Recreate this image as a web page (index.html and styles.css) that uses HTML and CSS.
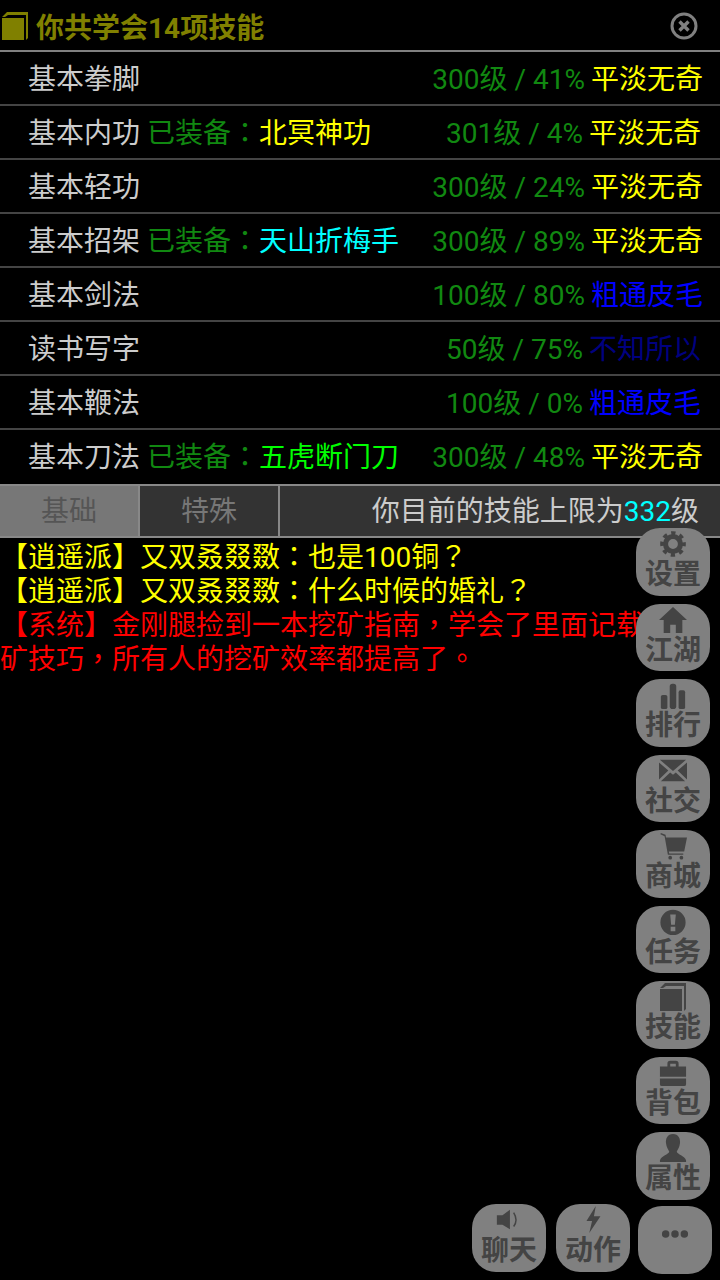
FILE: index.html
```html
<!DOCTYPE html>
<html lang="zh-CN">
<head>
  <meta charset="UTF-8" />
  <meta name="viewport" content="width=device-width, initial-scale=1.0" />
  <title>技能</title>
  <link rel="stylesheet" href="styles.css">
</head>
<body>
  <div class="header">
    <svg class="book-icon" viewBox="0 0 26 28"><path d="M0 5 L5 0 H26 V26 L24 28 V3 H6 L3 5 Z M0 6 H22 V28 H0 Z"/></svg>
    <div class="title">你共学会14项技能</div>
    <svg class="close-icon" viewBox="0 0 28 28"><circle cx="14" cy="14" r="12" fill="none" stroke-width="3"/><path d="M9.5 9.5 L18.5 18.5 M18.5 9.5 L9.5 18.5" fill="none" stroke-width="3.4"/></svg>
  </div>

  <div class="skills">
    <div class="row">
      <span class="skill">基本拳脚</span>
      <span class="level">300级 / 41%</span><span class="grade yellow">平淡无奇</span>
    </div>
    <div class="row narrow">
      <span class="skill">基本内功</span><span class="equip">已装备<span class="punct" lang="zh-TW">：</span></span><span class="yellow">北冥神功</span>
      <span class="level">301级 / 4%</span><span class="grade yellow">平淡无奇</span>
    </div>
    <div class="row">
      <span class="skill">基本轻功</span>
      <span class="level">300级 / 24%</span><span class="grade yellow">平淡无奇</span>
    </div>
    <div class="row">
      <span class="skill">基本招架</span><span class="equip">已装备<span class="punct" lang="zh-TW">：</span></span><span class="cyan">天山折梅手</span>
      <span class="level">300级 / 89%</span><span class="grade yellow">平淡无奇</span>
    </div>
    <div class="row">
      <span class="skill">基本剑法</span>
      <span class="level">100级 / 80%</span><span class="grade blue">粗通皮毛</span>
    </div>
    <div class="row narrow">
      <span class="skill">读书写字</span>
      <span class="level">50级 / 75%</span><span class="grade navy">不知所以</span>
    </div>
    <div class="row narrow">
      <span class="skill">基本鞭法</span>
      <span class="level">100级 / 0%</span><span class="grade blue">粗通皮毛</span>
    </div>
    <div class="row">
      <span class="skill">基本刀法</span><span class="equip">已装备<span class="punct" lang="zh-TW">：</span></span><span class="lime">五虎断门刀</span>
      <span class="level">300级 / 48%</span><span class="grade yellow">平淡无奇</span>
    </div>
  </div>

  <div class="tabs">
    <div class="tab active">基础</div>
    <div class="tab">特殊</div>
    <div class="limit">你目前的技能上限为<span class="cyan">332</span>级</div>
  </div>

  <div class="chat">
    <div class="yellow">【逍遥派】又双叒叕敪<span class="punct" lang="zh-TW">：</span>也是100铜<span class="punct" lang="zh-TW">？</span></div>
    <div class="yellow">【逍遥派】又双叒叕敪<span class="punct" lang="zh-TW">：</span>什么时候的婚礼<span class="punct" lang="zh-TW">？</span></div>
    <div class="red">【系统】金刚腿捡到一本挖矿指南<span class="punct" lang="zh-TW">，</span>学会了里面记载的挖矿技巧<span class="punct" lang="zh-TW">，</span>所有人的挖矿效率都提高了<span class="punct" lang="zh-TW">。</span></div>
  </div>

  <div class="side-menu">
    <div class="menu-btn">
      <svg viewBox="0 0 30 30"><circle class="line" cx="15" cy="15" r="8" stroke-width="5.5"/><circle class="line" cx="15" cy="15" r="11.5" stroke-width="4.5" stroke-dasharray="4.5 4.53" stroke-dashoffset="2.25"/></svg>
      <span>设置</span>
    </div>
    <div class="menu-btn">
      <svg viewBox="0 0 30 30"><path d="M15 1 L30 15 H25 V29 H18 V20 H12 V29 H5 V15 H0 Z"/></svg>
      <span>江湖</span>
    </div>
    <div class="menu-btn">
      <svg viewBox="0 0 30 30"><rect x="2" y="15" width="7" height="15" rx="2"/><rect x="11.5" y="3" width="7" height="27" rx="3"/><rect x="21" y="10" width="7" height="20" rx="2"/></svg>
      <span>排行</span>
    </div>
    <div class="menu-btn">
      <svg viewBox="0 0 30 30"><path d="M1 3 H29 L15 15 Z M0 6 L10 14.5 L0 24 Z M30 6 L20 14.5 L30 24 Z M12 16.5 L15 19 L18 16.5 L28 26 H2 Z"/></svg>
      <span>社交</span>
    </div>
    <div class="menu-btn">
      <svg viewBox="0 0 30 30"><path d="M2 1 L7 3 L7.5 6 H30 L27 21 H10.5 L11 23 H26 V24.5 H9.5 L6 4.5 L1.5 2.5 Z"/><circle cx="12" cy="27.5" r="2"/><circle cx="24" cy="27.5" r="2"/></svg>
      <span>商城</span>
    </div>
    <div class="menu-btn">
      <svg viewBox="0 0 30 30"><path fill-rule="evenodd" d="M15 2 A13.5 13.5 0 1 0 15 29 A13.5 13.5 0 1 0 15 2 Z M12 7 H18 L17 18 H13 Z M12.5 20 H17.5 V25 H12.5 Z"/></svg>
      <span>任务</span>
    </div>
    <div class="menu-btn">
      <svg viewBox="0 0 26 28"><path d="M0 5 L5 0 H26 V26 L24 28 V3 H6 L3 5 Z M0 6 H22 V28 H0 Z"/></svg>
      <span>技能</span>
    </div>
    <div class="menu-btn">
      <svg viewBox="0 0 30 30"><path fill-rule="evenodd" d="M1 8 H9 V5 Q9 2 12 2 H18 Q21 2 21 5 V8 H29 V19 H1 Z M12 5 V8 H18 V5 Z M1 21 H29 V27 Q29 29 27 29 H3 Q1 29 1 27 Z"/></svg>
      <span>背包</span>
    </div>
    <div class="menu-btn">
      <svg viewBox="0 0 30 30"><path d="M15 0 C21 0 23 5 22.5 10 C22 14 20 17 19 19 C20 22 27 23 29 28 V30 H1 V28 C3 23 10 22 11 19 C10 17 8 14 7.5 10 C7 5 9 0 15 0 Z"/></svg>
      <span>属性</span>
    </div>
  </div>

  <div class="bottom-menu">
    <div class="menu-btn">
      <svg viewBox="0 0 30 30"><path d="M2 10 H8 L16 4 V25 L8 20 H2 Z"/><path class="line" d="M20 7 Q25 15 20 22" stroke-width="1.6"/></svg>
      <span>聊天</span>
    </div>
    <div class="menu-btn">
      <svg viewBox="0 0 30 30"><path d="M18 0 L8 16 H14 L11 29 L23 11 H16 Z"/></svg>
      <span>动作</span>
    </div>
    <div class="menu-btn more">
      <svg viewBox="0 0 30 30"><circle cx="5" cy="15" r="4"/><circle cx="15" cy="15" r="4"/><circle cx="25" cy="15" r="4"/></svg>
    </div>
  </div>
</body>
</html>
```

FILE: styles.css
```css
html, body {
  margin: 0;
  padding: 0;
  background: #000;
}
body {
  position: relative;
  width: 720px;
  height: 1280px;
  overflow: hidden;
  font-family: Roboto, "Noto Sans CJK SC", sans-serif;
  font-size: 28px;
  color: #ccc;
}
.punct {
  font-family: "Noto Sans CJK TC", sans-serif;
  line-height: 0;
}
.yellow { color: #ff0; }
.cyan { color: #0ff; }
.lime { color: #0f0; }
.blue { color: #00f; }
.navy { color: #000080; }
.red { color: #f00; }

.header {
  display: flex;
  align-items: center;
  height: 50px;
  padding: 2px 22px 0 2px;
  box-sizing: border-box;
}
.book-icon {
  width: 26px;
  height: 28px;
  fill: #808000;
}
.title {
  flex: 1;
  margin-left: 8px;
  font-weight: bold;
  color: #808000;
}
.close-icon {
  width: 28px;
  height: 28px;
  stroke: #808080;
}

.skills {
  border-top: 2px solid #808080;
}
.row {
  display: flex;
  align-items: center;
  height: 50px;
  padding: 0 17px 2px 28px;
  border-bottom: 2px solid #444;
  white-space: nowrap;
}
.row.narrow {
  padding-right: 19px;
}
.row:last-child {
  border-bottom: 0;
}
.equip {
  margin-left: 7px;
  color: #118811;
}
.level {
  margin-left: auto;
  color: #118811;
}
.grade {
  margin-left: 6px;
}

.tabs {
  display: flex;
  height: 50px;
  margin-top: 2px;
  border-top: 2px solid #888;
  border-bottom: 2px solid #888;
  background: #333;
}
.tab {
  width: 138px;
  border-right: 2px solid #888;
  line-height: 52px;
  text-align: center;
  color: #777;
}
.tab.active {
  background: #777;
  color: #555;
}
.limit {
  flex: 1;
  padding-right: 21px;
  line-height: 51px;
  text-align: right;
}

.chat {
  line-height: 34px;
  padding-top: 3px;
}

.side-menu {
  position: absolute;
  left: 636px;
  top: 528px;
  display: flex;
  flex-direction: column;
  gap: 8px;
}
.bottom-menu {
  position: absolute;
  left: 472px;
  top: 1204px;
  display: flex;
  gap: 10px;
}
.menu-btn {
  display: flex;
  flex-direction: column;
  align-items: center;
  width: 74px;
  height: 67.5px;
  padding-top: 2px;
  box-sizing: border-box;
  border-radius: 24px;
  background: #808080;
  color: #444;
  font-size: 28px;
  font-weight: bold;
  line-height: 33px;
}
.menu-btn svg {
  width: 28px;
  height: 28px;
  fill: #444;
  flex: none;
}
.menu-btn svg .line {
  fill: none;
  stroke: #444;
}
.bottom-menu .menu-btn {
  height: 68px;
}
.menu-btn.more {
  margin: 2px 0 0 -2px;
  padding-top: 14px;
}
```
